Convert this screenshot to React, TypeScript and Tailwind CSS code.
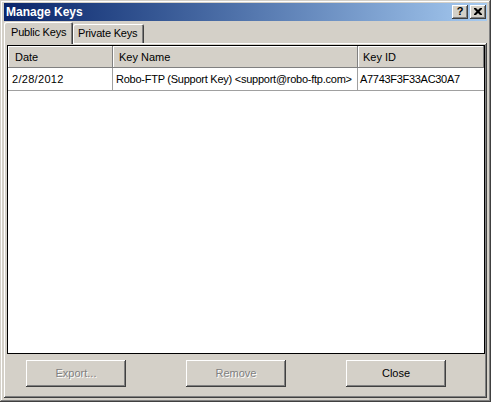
import React from 'react';

const font = { fontFamily: '"Liberation Sans", Arial, sans-serif' };

function TitleButton({ children }: { children: React.ReactNode }) {
  return (
    <div className="w-[16px] h-[14px] bg-[#d4d0c8] flex items-center justify-center shadow-[inset_-1px_-1px_#404040,inset_1px_1px_#ffffff,inset_-2px_-2px_#808080]">
      {children}
    </div>
  );
}

function Button({ label, disabled }: { label: string; disabled?: boolean }) {
  return (
    <div
      className={
        'w-[100px] h-[27px] bg-[#d4d0c8] flex items-center justify-center text-[11px] shadow-[inset_-1px_-1px_#404040,inset_1px_1px_#ffffff,inset_-2px_-2px_#808080] ' +
        (disabled ? 'text-[#808080] [text-shadow:1px_1px_0_#ffffff]' : 'text-black')
      }
    >
      {label}
    </div>
  );
}

export default function App() {
  return (
    <div
      style={font}
      className="w-[491px] h-[402px] bg-[#d4d0c8] flex flex-col pt-[3px] px-[4px] pb-[4px] shadow-[inset_-1px_-1px_#404040,inset_1px_1px_#d4d0c8,inset_-2px_-2px_#808080,inset_2px_2px_#ffffff] select-none"
    >
      {/* title bar */}
      <div className="h-[18px] flex items-center justify-between pl-[2px] pr-[1px] bg-gradient-to-r from-[#0a246a] to-[#a6caf0]">
        <span className="text-white font-bold text-[12px] leading-none">Manage Keys</span>
        <div className="flex gap-[2px]">
          <TitleButton>
            <span className="text-[11px] font-bold leading-none text-black -mt-[1px]">?</span>
          </TitleButton>
          <TitleButton>
            <svg width="8" height="7" viewBox="0 0 8 7" className="-mt-[1px]">
              <path d="M0 0h2l2 2 2-2h2v1l-2.5 2.5L8 6v1H6L4 5 2 7H0V6l2.5-2.5L0 1z" fill="#000" />
            </svg>
          </TitleButton>
        </div>
      </div>

      {/* tabs */}
      <div className="mt-[1px] h-[21px] flex items-end relative z-10">
        <div className="w-[69px] h-[22px] -mb-[1px] bg-[#d4d0c8] rounded-t-[2px] flex items-center pl-[7px] pb-[1px] text-[11px] tracking-[-0.2px] text-black shadow-[inset_1px_1px_#ffffff,inset_-1px_0_#404040,inset_-2px_0_#808080]">
          Public Keys
        </div>
        <div className="w-[71px] h-[19px] bg-[#d4d0c8] rounded-t-[2px] flex items-center pl-[5px] text-[11px] tracking-[-0.2px] text-black shadow-[inset_1px_1px_#ffffff,inset_-1px_0_#404040,inset_-2px_0_#808080]">
          Private Keys
        </div>
      </div>

      {/* tab panel */}
      <div className="flex-1 flex flex-col shadow-[inset_-1px_-1px_#404040,inset_1px_1px_#ffffff,inset_-2px_-2px_#808080]">
        <div className="mt-[2px] ml-[3px] mr-[2px] h-[309px] bg-white border border-black flex flex-col text-[11px] text-black">
          <div className="flex h-[22px]">
            <div className="w-[105px] flex items-center pl-[7px] bg-[#d4d0c8] shadow-[inset_-1px_-1px_#808080,inset_1px_1px_#ffffff]">Date</div>
            <div className="w-[245px] flex items-center pl-[6px] bg-[#d4d0c8] shadow-[inset_-1px_-1px_#808080,inset_1px_1px_#ffffff]">Key Name</div>
            <div className="w-[126px] flex items-center pl-[5px] bg-[#d4d0c8] shadow-[inset_-1px_-1px_#808080,inset_1px_1px_#ffffff]">Key ID</div>
          </div>
          <div className="flex h-[23px] border-b border-[#a0a0a0]">
            <div className="w-[105px] flex items-center pl-[4px] border-r border-[#a0a0a0] tracking-[0.3px]">2/28/2012</div>
            <div className="w-[245px] flex items-center pl-[3px] border-r border-[#a0a0a0] tracking-[-0.25px] whitespace-nowrap">
              Robo-FTP (Support Key) &lt;support@robo-ftp.com&gt;
            </div>
            <div className="w-[126px] flex items-center pl-[2px] tracking-[-0.3px]">A7743F3F33AC30A7</div>
          </div>
        </div>
        <div className="mt-[6px] pl-[22px] flex gap-[60px]">
          <Button label="Export..." disabled />
          <Button label="Remove" disabled />
          <Button label="Close" />
        </div>
      </div>
    </div>
  );
}
